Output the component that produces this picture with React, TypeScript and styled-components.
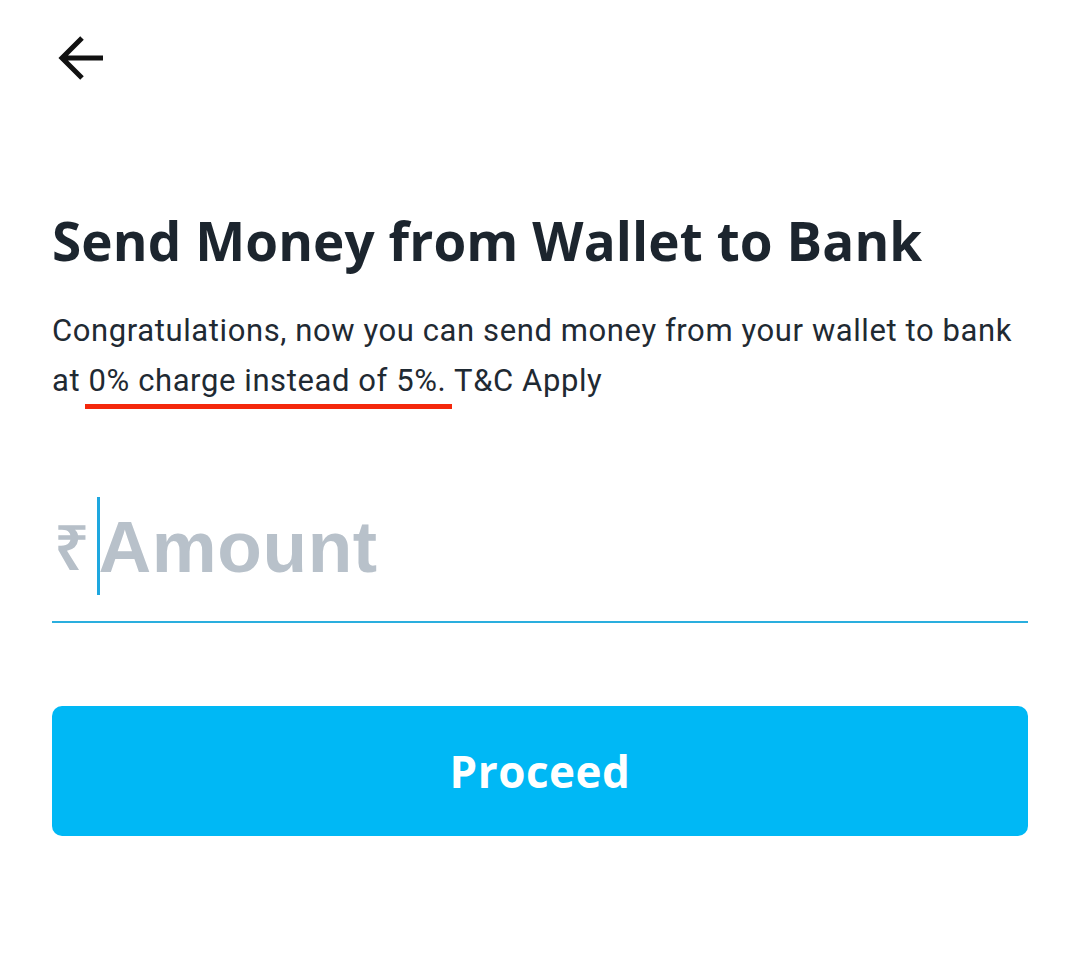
import React from "react";
import styled, { createGlobalStyle } from "styled-components";

const Global = createGlobalStyle`
  html, body { margin: 0; padding: 0; background: #ffffff; }
  body { font-family: "Open Sans", "Noto Sans", sans-serif; }
`;

const Page = styled.div`
  width: 1080px;
  height: 971px;
  box-sizing: border-box;
  padding: 36px 52px 0 52px;
  display: flex;
  flex-direction: column;
  background: #fff;
`;

const BackButton = styled.button`
  width: 48px;
  height: 44px;
  padding: 0;
  margin-left: 6px;
  border: none;
  background: none;
  display: flex;
  align-items: center;
  justify-content: flex-start;
  color: #111;
`;

const Title = styled.h1`
  margin: 126px 0 0 0;
  font-family: "Open Sans", sans-serif;
  font-weight: 700;
  font-size: 53px;
  line-height: 70px;
  color: #1c252e;
  letter-spacing: 0.1px;
  white-space: nowrap;
`;

const Desc = styled.p`
  margin: 30px 0 0 0;
  max-width: 975px;
  font-family: Roboto, "Noto Sans", sans-serif;
  font-size: 31px;
  line-height: 50px;
  letter-spacing: 0.6px;
  color: #1f2a33;
`;

const Marked = styled.span`
  position: relative;
  &::after {
    content: "";
    position: absolute;
    left: -4px;
    right: -6px;
    bottom: -10px;
    height: 5px;
    background: #f4280c;
  }
`;

const Field = styled.div`
  margin-top: 87px;
  height: 130px;
  display: flex;
  align-items: center;
  border-bottom: 2px solid #2aaede;
  box-sizing: border-box;
  padding-bottom: 22px;
`;

const Rupee = styled.span`
  font-family: "Noto Sans", "DejaVu Sans", sans-serif;
  font-size: 62px;
  font-weight: 600;
  color: #b6bfc8;
  margin-left: 2px;
`;

const Caret = styled.span`
  width: 3px;
  height: 98px;
  background: #1ea7df;
  margin-left: 8px;
`;

const Placeholder = styled.span`
  font-family: "Liberation Sans", Arial, sans-serif;
  font-weight: 700;
  font-size: 73px;
  color: #b8c1ca;
  letter-spacing: 0.6px;
  margin-left: -2px;
`;

const Proceed = styled.button`
  margin-top: 83px;
  height: 130px;
  width: 100%;
  border: none;
  border-radius: 10px;
  background: #00b8f5;
  color: #ffffff;
  font-family: "Open Sans", sans-serif;
  font-weight: 700;
  font-size: 44px;
  letter-spacing: 0.5px;
`;

export default function App() {
  return (
    <>
      <Global />
      <Page>
        <BackButton aria-label="Back">
          <svg width="46" height="44" viewBox="0 0 46 44" fill="none">
            <path d="M4 22 H45 M24 2 L4 22 L24 42" stroke="#111" strokeWidth="5" strokeLinecap="butt" strokeLinejoin="miter" />
          </svg>
        </BackButton>
        <Title>Send Money from Wallet to Bank</Title>
        <Desc>
          Congratulations, now you can send money from your wallet to bank at{" "}
          <Marked>0% charge instead of 5%.</Marked> T&amp;C Apply
        </Desc>
        <Field>
          <Rupee>₹</Rupee>
          <Caret />
          <Placeholder>Amount</Placeholder>
        </Field>
        <Proceed>Proceed</Proceed>
      </Page>
    </>
  );
}
